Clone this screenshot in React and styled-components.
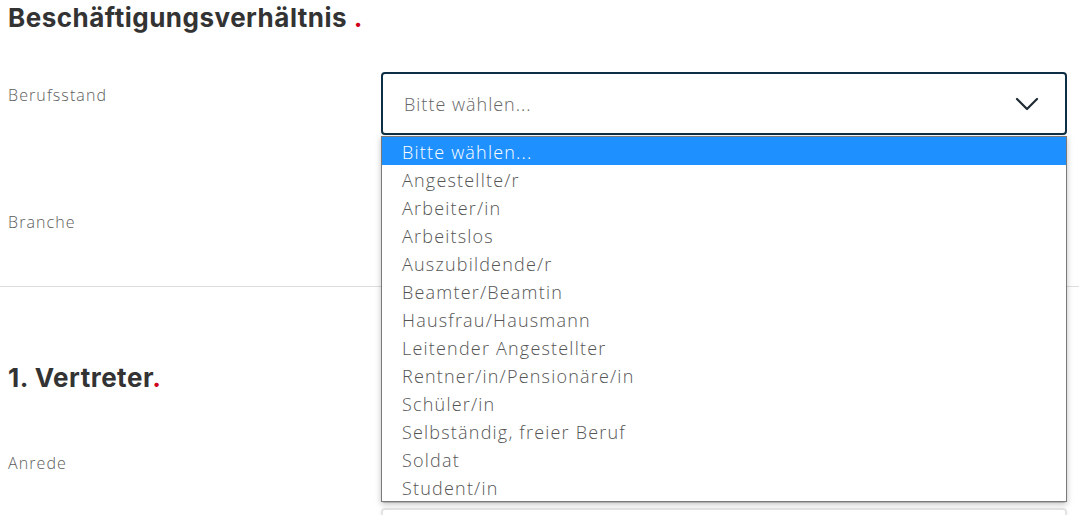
import styled, { createGlobalStyle } from "styled-components";

const options = [
  "Bitte wählen...",
  "Angestellte/r",
  "Arbeiter/in",
  "Arbeitslos",
  "Auszubildende/r",
  "Beamter/Beamtin",
  "Hausfrau/Hausmann",
  "Leitender Angestellter",
  "Rentner/in/Pensionäre/in",
  "Schüler/in",
  "Selbständig, freier Beruf",
  "Soldat",
  "Student/in",
];

export default function App() {
  return (
    <>
      <GlobalStyle />
      <Page>
        <Section>
          <Heading>
            Beschäftigungsverhältnis <Dot>.</Dot>
          </Heading>
          <Row>
            <Label>Berufsstand</Label>
            <SelectWrap>
              <Select $active>
                <span>Bitte wählen...</span>
                <Chevron />
              </Select>
              <Menu>
                {options.map((o, i) => (
                  <Option key={o} $selected={i === 0}>
                    {o}
                  </Option>
                ))}
              </Menu>
            </SelectWrap>
          </Row>
          <Row $gap="24px">
            <Label>Branche</Label>
            <SelectWrap>
              <Select>
                <span>Bitte wählen...</span>
                <Chevron />
              </Select>
            </SelectWrap>
          </Row>
        </Section>
        <Divider />
        <Section $second>
          <Heading $small>
            1. Vertreter<Dot>.</Dot>
          </Heading>
          <Row $gap="5px">
            <Label>Anrede</Label>
            <SelectWrap>
              <Select>
                <span>Bitte wählen...</span>
                <Chevron />
              </Select>
            </SelectWrap>
          </Row>
          <Row>
            <Label />
            <Input />
          </Row>
        </Section>
      </Page>
    </>
  );
}

function Chevron() {
  return (
    <ChevronSvg viewBox="0 0 24 14" width="24" height="14">
      <path
        d="M2 2 L12 12 L22 2"
        fill="none"
        stroke="#1f2a33"
        strokeWidth="2.2"
        strokeLinecap="round"
        strokeLinejoin="round"
      />
    </ChevronSvg>
  );
}

const GlobalStyle = createGlobalStyle`
  body {
    margin: 0;
    background: #fff;
    font-family: "Open Sans", Inter, sans-serif;
    color: #333;
    overflow: hidden;
  }
`;

const Page = styled.div`
  width: 1079px;
  height: 515px;
  overflow: hidden;
`;

const Section = styled.section`
  padding: ${(p) => (p.$second ? "75px 12px 0 8px" : "2px 12px 0 8px")};
`;

const Heading = styled.h2`
  margin: 0 0 ${(p) => (p.$small ? "46px" : "38px")};
  font-family: Inter, sans-serif;
  font-size: 26px;
  font-weight: 700;
  line-height: 32px;
  letter-spacing: 0.5px;
  color: #333;
`;

const Dot = styled.span`
  color: #d0021b;
`;

const Row = styled.div`
  display: grid;
  grid-template-columns: 373px 1fr;
  align-items: start;
  margin-bottom: ${(p) => p.$gap || "64px"};
`;

const Label = styled.div`
  padding-top: 13px;
  font-size: 16px;
  font-weight: 300;
  letter-spacing: 1.1px;
  color: #5c5c5c;
  line-height: 20px;
`;

const SelectWrap = styled.div`
  position: relative;
`;

const Select = styled.div`
  box-sizing: border-box;
  height: 63px;
  display: flex;
  align-items: center;
  justify-content: space-between;
  padding: 0 26px 0 21px;
  border: 2px solid ${(p) => (p.$active ? "#0e2e45" : "#d6d6d6")};
  border-radius: 4px;
  background: #fff;
  font-size: 18px;
  font-weight: 300;
  letter-spacing: 1px;
  color: #666;
`;

const ChevronSvg = styled.svg`
  display: block;
`;

const Menu = styled.ul`
  position: absolute;
  top: calc(100% + 1px);
  left: 0;
  right: 0;
  margin: 0;
  padding: 0;
  list-style: none;
  background: #fff;
  border: 1px solid #7a7a7a;
  box-shadow: 0 2px 6px rgba(0, 0, 0, 0.25);
  z-index: 10;
`;

const Option = styled.li`
  height: 28px;
  line-height: 30px;
  padding-left: 20px;
  font-size: 18px;
  font-weight: 300;
  letter-spacing: 1.2px;
  background: ${(p) => (p.$selected ? "#1e90ff" : "#fff")};
  color: ${(p) => (p.$selected ? "#fff" : "#555")};
`;

const Input = styled.div`
  box-sizing: border-box;
  height: 63px;
  border: 2px solid #e4e4e4;
  border-radius: 4px;
  box-shadow: 0 1px 4px rgba(0, 0, 0, 0.08);
`;

const Divider = styled.hr`
  margin: 0;
  border: 0;
  border-top: 1px solid #dedede;
`;
